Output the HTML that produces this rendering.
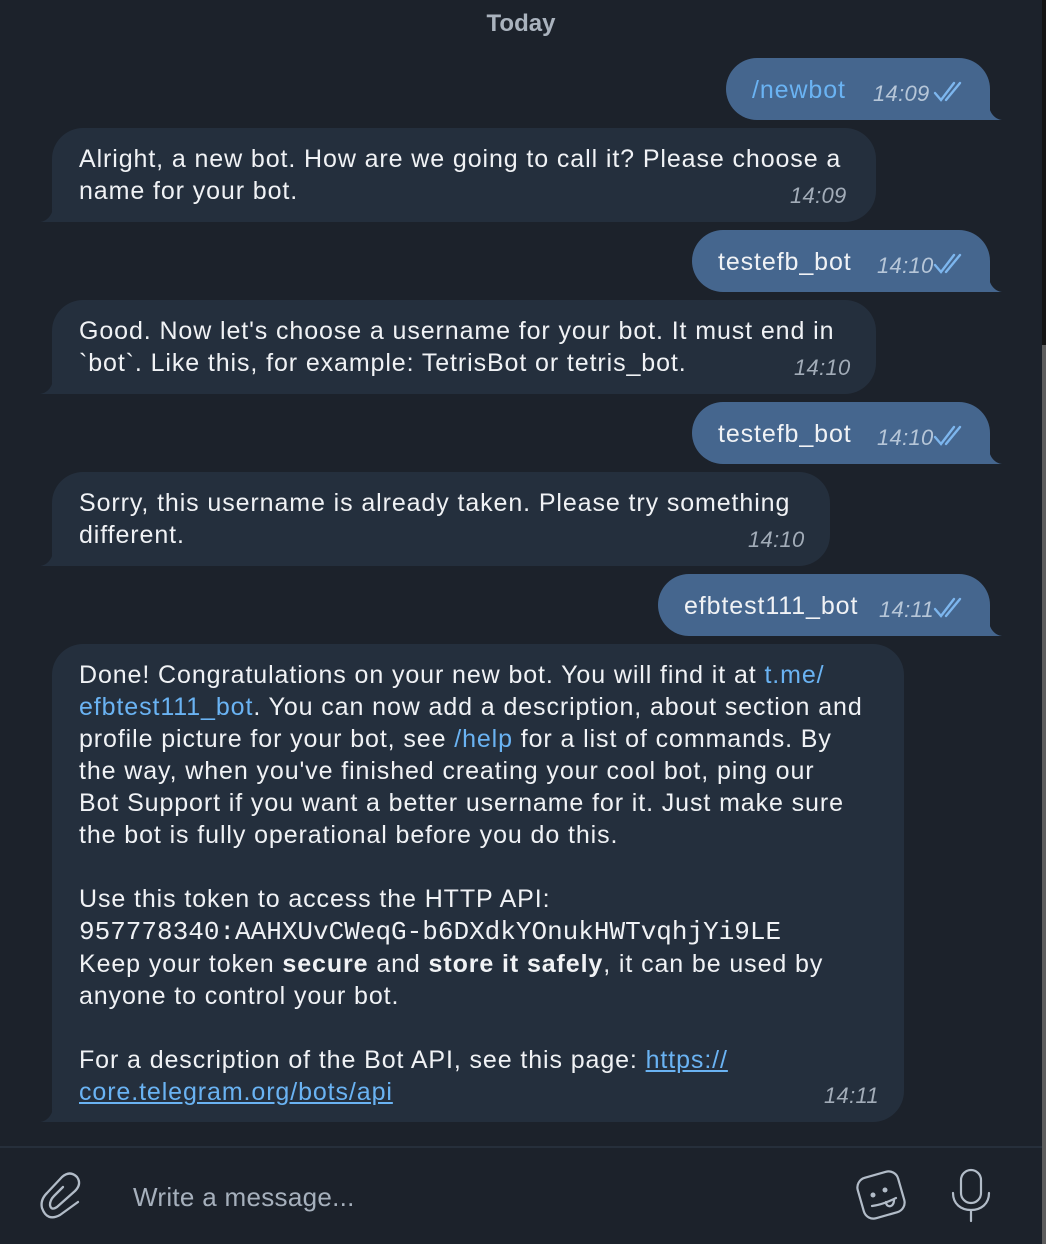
<!DOCTYPE html>
<html><head><meta charset="utf-8"><style>
*{margin:0;padding:0;box-sizing:border-box}
body{width:1046px;height:1244px;background:#1c222b;font-family:"Liberation Sans",Arial,sans-serif;color:#f0f2f5;position:relative;overflow:hidden}
.b{position:absolute;border-radius:31px;font-size:25px;letter-spacing:0.9px;line-height:32px;white-space:nowrap}
.in{background:#242f3d;left:52px;padding:15px 27px}
.out{background:#45668e;padding:16px 0 0 26px;height:62px}
.t{position:absolute;font-style:italic;font-size:22px;letter-spacing:0.3px;color:#a2acb8}
.out .t{color:#b6c6d8}
.tailL{position:absolute;left:40px;width:30px;height:22px}
.tailR{position:absolute;width:30px;height:22px}
a{color:#6ab3f3;text-decoration:none}
a.u{text-decoration:underline}
.mono{font-family:"Liberation Mono",monospace;font-size:26px;letter-spacing:0}
.ck{position:absolute}
</style></head><body>
<div style="position:absolute;top:10px;left:0;width:1042px;text-align:center;font-weight:bold;font-size:24px;color:#aab3be">Today</div>

<svg width="0" height="0" style="position:absolute"><defs>
<path id="tl" d="M30 0 V22 H0 C8 21 14 14 14 0 Z"/>
<path id="tr" d="M0 0 V22 H30 C22 21 16 14 16 0 Z"/>
<g id="ck" fill="none" stroke="#7db6ee" stroke-width="2.4" stroke-linecap="round"><path d="M2 13 L8 20 L21 3"/><path d="M13 20 L27 3"/></g>
</defs></svg>

<!-- 1 -->
<div class="b out" style="top:58px;left:726px;width:264px;border-bottom-right-radius:10px"><a>/newbot</a><span class="t" style="left:147px;top:20px">14:09</span><svg class="ck" style="left:207px;top:22px" width="30" height="24"><use href="#ck"/></svg></div>
<svg class="tailR" style="left:972px;top:98px" fill="#45668e"><use href="#tr"/></svg>
<!-- 2 -->
<div class="b in" style="top:128px;width:824px;height:94px;border-bottom-left-radius:10px">Alright, a new bot. How are we going to call it? Please choose a<br>name for your bot.<span class="t" style="left:738px;top:52px">14:09</span></div>
<svg class="tailL" style="top:200px" fill="#242f3d"><use href="#tl"/></svg>
<!-- 3 -->
<div class="b out" style="top:230px;left:692px;width:298px;border-bottom-right-radius:10px">testefb_bot<span class="t" style="left:185px;top:20px">14:10</span><svg class="ck" style="left:241px;top:22px" width="30" height="24"><use href="#ck"/></svg></div>
<svg class="tailR" style="left:972px;top:270px" fill="#45668e"><use href="#tr"/></svg>
<!-- 4 -->
<div class="b in" style="top:300px;width:824px;height:94px;border-bottom-left-radius:10px">Good. Now let's choose a username for your bot. It must end in<br>`bot`. Like this, for example: TetrisBot or tetris_bot.<span class="t" style="left:742px;top:52px">14:10</span></div>
<svg class="tailL" style="top:372px" fill="#242f3d"><use href="#tl"/></svg>
<!-- 5 -->
<div class="b out" style="top:402px;left:692px;width:298px;border-bottom-right-radius:10px">testefb_bot<span class="t" style="left:185px;top:20px">14:10</span><svg class="ck" style="left:241px;top:22px" width="30" height="24"><use href="#ck"/></svg></div>
<svg class="tailR" style="left:972px;top:442px" fill="#45668e"><use href="#tr"/></svg>
<!-- 6 -->
<div class="b in" style="top:472px;width:778px;height:94px;border-bottom-left-radius:10px">Sorry, this username is already taken. Please try something<br>different.<span class="t" style="left:696px;top:52px">14:10</span></div>
<svg class="tailL" style="top:544px" fill="#242f3d"><use href="#tl"/></svg>
<!-- 7 -->
<div class="b out" style="top:574px;left:658px;width:332px;border-bottom-right-radius:10px">efbtest111_bot<span class="t" style="left:221px;top:20px">14:11</span><svg class="ck" style="left:275px;top:22px" width="30" height="24"><use href="#ck"/></svg></div>
<svg class="tailR" style="left:972px;top:614px" fill="#45668e"><use href="#tr"/></svg>
<!-- 8 -->
<div class="b in" style="top:644px;width:852px;height:478px;border-bottom-left-radius:10px">Done! Congratulations on your new bot. You will find it at <a>t.me/</a><br><a>efbtest111_bot</a>. You can now add a description, about section and<br>profile picture for your bot, see <a>/help</a> for a list of commands. By<br>the way, when you've finished creating your cool bot, ping our<br>Bot Support if you want a better username for it. Just make sure<br>the bot is fully operational before you do this.<br><br>Use this token to access the HTTP API:<br><span class="mono">957778340:AAHXUvCWeqG-b6DXdkYOnukHWTvqhjYi9LE</span><br>Keep your token <b>secure</b> and <b>store it safely</b>, it can be used by<br>anyone to control your bot.<br><br>For a description of the Bot API, see this page: <a class="u">https://</a><br><a class="u">core.telegram.org/bots/api</a><span class="t" style="left:772px;top:436px">14:11</span></div>
<svg class="tailL" style="top:1100px" fill="#242f3d"><use href="#tl"/></svg>

<!-- input bar -->
<div style="position:absolute;left:0;top:1146px;width:1042px;height:2px;background:#262f3b"></div>
<svg style="position:absolute;left:20px;top:1160px" width="90" height="80" fill="none" stroke="#b2bcc8" stroke-width="2.3" stroke-linecap="round" stroke-linejoin="round"><path d="M58 42 L40 55 Q27 62 22 48 Q20 40 27 33 L42 17 Q50 10 57 17 Q62 24 55 31 L37 47 Q31 51 30 45 Q30 40 34 36 L43 27"/></svg>
<div style="position:absolute;left:133px;top:1182px;font-size:26px;letter-spacing:0.3px;color:#a6b0bc">Write a message...</div>
<svg style="position:absolute;left:850px;top:1166px" width="64" height="60" fill="none" stroke="#b2bcc8" stroke-width="2.2" stroke-linecap="round"><rect x="10" y="8" width="42" height="42" rx="10" transform="rotate(-16 31 29)"/><circle cx="23" cy="29" r="2.5" fill="#b2bcc8" stroke="none"/><circle cx="35" cy="24" r="2.5" fill="#b2bcc8" stroke="none"/><path d="M22 40 C30 39 38 36 46 32"/><path d="M36 36 C36 42 44 42 44 34"/></svg>
<svg style="position:absolute;left:950px;top:1168px" width="44" height="56" fill="none" stroke="#b2bcc8" stroke-width="2.2" stroke-linecap="round"><rect x="11" y="2" width="20" height="33" rx="10"/><path d="M3 25 C3 36 11 42 21 42 C31 42 39 36 39 25"/><path d="M21 42 V53"/></svg>

<!-- right edge -->
<div style="position:absolute;left:1042px;top:0;width:4px;height:1244px;background:#141414"></div>
<div style="position:absolute;left:1042px;top:345px;width:4px;height:899px;background:#5d5d5d"></div>
</body></html>
